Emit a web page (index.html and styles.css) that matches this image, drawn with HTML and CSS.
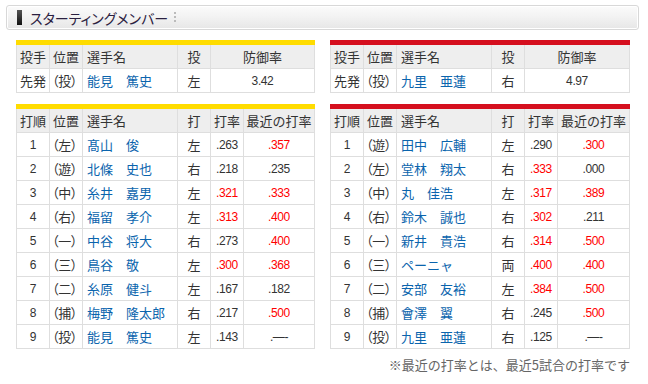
FILE: index.html
```html
<!DOCTYPE html>
<html lang="ja">
<head>
<meta charset="utf-8">
<title>スターティングメンバー</title>
<link rel="stylesheet" href="styles.css">
</head>
<body>
<div class="page">
  <div class="title-bar">
    <span class="mark"></span>
    <h2 class="title">スターティングメンバー</h2>
    <span class="sep"></span>
  </div>
  <div class="teams">
    <div class="team home">
      <table class="grid pitcher">
        <colgroup><col class="c-a"><col class="c-b"><col class="c-name"><col class="c-d"><col class="c-era"></colgroup>
        <tr><th>投手</th><th>位置</th><th class="l">選手名</th><th>投</th><th>防御率</th></tr>
        <tr><td>先発</td><td class="pos">（投）</td><td class="name">能見　篤史</td><td>左</td><td class="num">3.42</td></tr>
      </table>
      <table class="grid lineup">
        <colgroup><col class="c-a"><col class="c-b"><col class="c-name"><col class="c-d"><col class="c-avg"><col class="c-rec"></colgroup>
        <tr><th>打順</th><th>位置</th><th class="l">選手名</th><th>打</th><th>打率</th><th>最近の打率</th></tr>
        <tr><td class="num">1</td><td class="pos">（左）</td><td class="name">髙山　俊</td><td>左</td><td class="num">.263</td><td class="num hot">.357</td></tr>
        <tr><td class="num">2</td><td class="pos">（遊）</td><td class="name">北條　史也</td><td>右</td><td class="num">.218</td><td class="num">.235</td></tr>
        <tr><td class="num">3</td><td class="pos">（中）</td><td class="name">糸井　嘉男</td><td>左</td><td class="num hot">.321</td><td class="num hot">.333</td></tr>
        <tr><td class="num">4</td><td class="pos">（右）</td><td class="name">福留　孝介</td><td>左</td><td class="num hot">.313</td><td class="num hot">.400</td></tr>
        <tr><td class="num">5</td><td class="pos">（一）</td><td class="name">中谷　将大</td><td>右</td><td class="num">.273</td><td class="num hot">.400</td></tr>
        <tr><td class="num">6</td><td class="pos">（三）</td><td class="name">鳥谷　敬</td><td>左</td><td class="num hot">.300</td><td class="num hot">.368</td></tr>
        <tr><td class="num">7</td><td class="pos">（二）</td><td class="name">糸原　健斗</td><td>左</td><td class="num">.167</td><td class="num">.182</td></tr>
        <tr><td class="num">8</td><td class="pos">（捕）</td><td class="name">梅野　隆太郎</td><td>右</td><td class="num">.217</td><td class="num hot">.500</td></tr>
        <tr><td class="num">9</td><td class="pos">（投）</td><td class="name">能見　篤史</td><td>左</td><td class="num">.143</td><td class="num">.―-</td></tr>
      </table>
    </div>
    <div class="team away">
      <table class="grid pitcher">
        <colgroup><col class="c-a"><col class="c-b"><col class="c-name"><col class="c-d"><col class="c-era"></colgroup>
        <tr><th>投手</th><th>位置</th><th class="l">選手名</th><th>投</th><th>防御率</th></tr>
        <tr><td>先発</td><td class="pos">（投）</td><td class="name">九里　亜蓮</td><td>右</td><td class="num">4.97</td></tr>
      </table>
      <table class="grid lineup">
        <colgroup><col class="c-a"><col class="c-b"><col class="c-name"><col class="c-d"><col class="c-avg"><col class="c-rec"></colgroup>
        <tr><th>打順</th><th>位置</th><th class="l">選手名</th><th>打</th><th>打率</th><th>最近の打率</th></tr>
        <tr><td class="num">1</td><td class="pos">（遊）</td><td class="name">田中　広輔</td><td>左</td><td class="num">.290</td><td class="num hot">.300</td></tr>
        <tr><td class="num">2</td><td class="pos">（左）</td><td class="name">堂林　翔太</td><td>右</td><td class="num hot">.333</td><td class="num">.000</td></tr>
        <tr><td class="num">3</td><td class="pos">（中）</td><td class="name">丸　佳浩</td><td>左</td><td class="num hot">.317</td><td class="num hot">.389</td></tr>
        <tr><td class="num">4</td><td class="pos">（右）</td><td class="name">鈴木　誠也</td><td>右</td><td class="num hot">.302</td><td class="num">.211</td></tr>
        <tr><td class="num">5</td><td class="pos">（一）</td><td class="name">新井　貴浩</td><td>右</td><td class="num hot">.314</td><td class="num hot">.500</td></tr>
        <tr><td class="num">6</td><td class="pos">（三）</td><td class="name">ペーニャ</td><td>両</td><td class="num hot">.400</td><td class="num hot">.400</td></tr>
        <tr><td class="num">7</td><td class="pos">（二）</td><td class="name">安部　友裕</td><td>左</td><td class="num hot">.384</td><td class="num hot">.500</td></tr>
        <tr><td class="num">8</td><td class="pos">（捕）</td><td class="name">會澤　翼</td><td>右</td><td class="num">.245</td><td class="num hot">.500</td></tr>
        <tr><td class="num">9</td><td class="pos">（投）</td><td class="name">九里　亜蓮</td><td>右</td><td class="num">.125</td><td class="num">.―-</td></tr>
      </table>
    </div>
  </div>
  <p class="note">※最近の打率とは、最近5試合の打率です</p>
</div>
</body>
</html>
```

FILE: styles.css
```css
html, body {
  margin: 0;
  padding: 0;
  background: #fff;
}
body {
  font-family: "Noto Sans CJK JP", "Noto Sans", sans-serif;
  color: #333;
  font-size: 13px;
}
.page {
  width: 648px;
  padding-top: 5px;
}
.title-bar {
  margin: 0 9px 0 6px;
  height: 23px;
  border: 1px solid #d8d8d8;
  border-radius: 3px;
  background: linear-gradient(#fbfbfb 0%, #f3f3f3 45%, #e6e6e6 100%);
  display: flex;
  align-items: center;
  box-shadow: inset 0 0 0 1px #fff;
}
.mark {
  width: 5px;
  height: 15px;
  margin-left: 10px;
  background: linear-gradient(#555, #111);
}
.title {
  margin: 0 0 0 8px;
  font-size: 14px;
  font-weight: normal;
  color: #2a2040;
  font-feature-settings: "palt";
  line-height: 16px;
}
.sep {
  width: 2px;
  height: 12px;
  margin-left: 6px;
  background: repeating-linear-gradient(#bbb 0 2px, transparent 2px 4px);
}
.teams {
  display: flex;
  gap: 15px;
  padding-left: 16px;
  margin-top: 10px;
}
.team.home { width: 299px; }
.team.away { width: 300px; }
.grid {
  width: 100%;
  border-collapse: collapse;
  table-layout: fixed;
}
.home .grid { border-top: 5px solid #ffdc00; }
.away .grid { border-top: 5px solid #d50f1e; }
.lineup { margin-top: 11px; }
.c-a, .c-b, .c-d { width: 33px; }
.c-name { width: 95px; }
.c-avg { width: 33px; }
.grid th, .grid td {
  border: 1px solid #dedede;
  height: 23px;
  padding: 0;
  text-align: center;
  font-weight: normal;
  line-height: 16px;
  white-space: nowrap;
}
.grid tr:first-child th { border-top: none; }
.grid th {
  background: #eee;
  color: #333;
}
.grid th.l { text-align: left; padding-left: 4px; }
.grid td.pos {
  text-align: left;
  padding-left: 2px;
  font-feature-settings: "palt";
  letter-spacing: -0.3px;
}
.grid td.name {
  text-align: left;
  padding-left: 4px;
  color: #0a64ad;
}
.grid td.num {
  font-family: "Liberation Sans", Arial, sans-serif;
  font-size: 12px;
  letter-spacing: -0.4px;
}
.grid td.hot { color: #ff0000; }
.note {
  margin: 8px 18px 0 0;
  text-align: right;
  color: #666;
  font-size: 13px;
  line-height: 16px;
}
```
